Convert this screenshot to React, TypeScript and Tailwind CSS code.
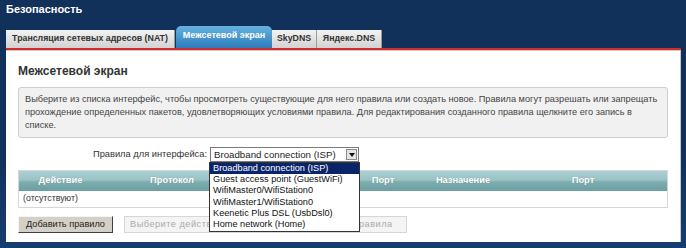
import React from "react";

const cols = [
  { t: "Действие", w: "w-[83px]" },
  { t: "Протокол", w: "w-[140px]" },
  { t: "Источник", w: "w-[113px]" },
  { t: "Порт", w: "w-[56px]" },
  { t: "Назначение", w: "w-[104px]" },
  { t: "Порт", w: "w-[136px]" },
];

const items = [
  "Broadband connection (ISP)",
  "Guest access point (GuestWiFi)",
  "WifiMaster0/WifiStation0",
  "WifiMaster1/WifiStation0",
  "Keenetic Plus DSL (UsbDsl0)",
  "Home network (Home)",
];

export default function App() {
  return (
    <div className="relative w-[686px] h-[248px] overflow-hidden bg-[linear-gradient(to_bottom,#11305a_0%,#11305a_60%,#163d70_100%)] font-['Liberation_Sans',Arial,sans-serif]">
      <div className="h-[26px] pl-[6px] pt-[2px] text-[11px] leading-[14px] font-bold text-white">
        Безопасность
      </div>
      <div className="flex items-end h-[22px] pl-[6px]">
        <div className="w-[169px] h-[18px] flex items-center justify-center whitespace-nowrap text-[8.8px] font-bold text-[#333] bg-[linear-gradient(to_bottom,#f3f3f3,#d2d2d2)] border-r border-[#9a9a9a]">
          Трансляция сетевых адресов (NAT)
        </div>
        <div className="ml-[1px] w-[96px] h-[22px] pb-[3px] flex items-center justify-center whitespace-nowrap text-[9px] font-bold text-white rounded-t-[5px] bg-[linear-gradient(to_bottom,#66b3df,#2c7cbd)]">
          Межсетевой экран
        </div>
        <div className="w-[45px] h-[18px] flex items-center justify-center whitespace-nowrap text-[8.8px] font-bold text-[#333] bg-[linear-gradient(to_bottom,#f3f3f3,#d2d2d2)] border-r border-[#9a9a9a]">
          SkyDNS
        </div>
        <div className="w-[65px] h-[18px] flex items-center justify-center whitespace-nowrap text-[8.8px] font-bold text-[#333] bg-[linear-gradient(to_bottom,#f3f3f3,#d2d2d2)] border-r border-[#9a9a9a]">
          Яндекс.DNS
        </div>
      </div>
      <div className="ml-[6px] w-[675px] h-[2px] bg-[#d32a2a]" />
      <div className="ml-[6px] w-[675px] h-[192px] bg-white border-t border-r border-[#c8c8c8] px-[12px] pt-[13px]">
        <div className="text-[12px] leading-[14px] font-bold text-[#333]">Межсетевой экран</div>
        <div className="mt-[9px] h-[51px] bg-[#f1f1f1] border border-[#cfcfcf] rounded-[3px] px-[6px] py-[5px] text-[9.2px] leading-[13px] text-[#444]">
          Выберите из списка интерфейс, чтобы просмотреть существующие для него правила или создать новое. Правила могут разрешать или запрещать прохождение определенных пакетов, удовлетворяющих условиями правила. Для редактирования созданного правила щелкните его запись в списке.
        </div>
        <div className="mt-[9px] flex items-center h-[15px]">
          <div className="w-[190px] text-right text-[9.3px] text-[#333] pr-[1px] whitespace-nowrap">Правила для интерфейса:</div>
          <div className="ml-[2px] w-[149px] h-[15px] border border-[#7a7a7a] bg-white flex items-center justify-between pl-[3px] pr-[1px]">
            <span className="text-[9.7px] text-[#222] leading-[12px] whitespace-nowrap">Broadband connection (ISP)</span>
            <span className="w-[11px] h-[11px] bg-[#e4e4e4] border border-[#8a8a8a] flex items-center justify-center">
              <svg width="6" height="4" viewBox="0 0 6 4"><path d="M0 0h6L3 4z" fill="#111" /></svg>
            </span>
          </div>
        </div>
        <div className="mt-[8px] border border-[#d6d6d6]">
          <div className="flex h-[20px] bg-[linear-gradient(to_bottom,#a9cfd1_0%,#9ac3c5_45%,#7cadaf_55%,#6c9fa2_100%)]">
            {cols.map((c, i) => (
              <div key={i} className={`${c.w} flex items-center justify-center text-[9.3px] font-bold text-white [text-shadow:0_0_1px_rgba(0,0,0,0.25)]`}>
                {c.t}
              </div>
            ))}
          </div>
          <div className="h-[16px] flex items-center pl-[4px] text-[8.8px] text-[#333]">(отсутствуют)</div>
        </div>
        <div className="mt-[8px] flex items-center">
          <button className="w-[95px] h-[17px] bg-[#d4d0c8] border border-t-[#f4f4f4] border-l-[#f4f4f4] border-b-[#404040] border-r-[#404040] text-[9.2px] text-[#222] flex items-center justify-center whitespace-nowrap">
            Добавить правило
          </button>
          <button className="ml-[11px] w-[283px] h-[17px] bg-[#f4f4f4] border border-[#d6d6d6] text-[9.2px] tracking-[0.5px] text-[#aaa] flex items-center pl-[5px] whitespace-nowrap overflow-hidden">
            Выберите действие для выделенного в списке правила
          </button>
        </div>
      </div>
      <div className="absolute left-[209px] top-[162px] w-[151px] h-[70px] bg-white border border-[#333]">
        {items.map((t, i) => (
          <div key={i} className={`h-[11.33px] flex items-center pl-[3px] text-[9.2px] whitespace-nowrap ${i === 0 ? "bg-[#0a246a] text-white" : "text-[#111]"}`}>
            {t}
          </div>
        ))}
      </div>
    </div>
  );
}
